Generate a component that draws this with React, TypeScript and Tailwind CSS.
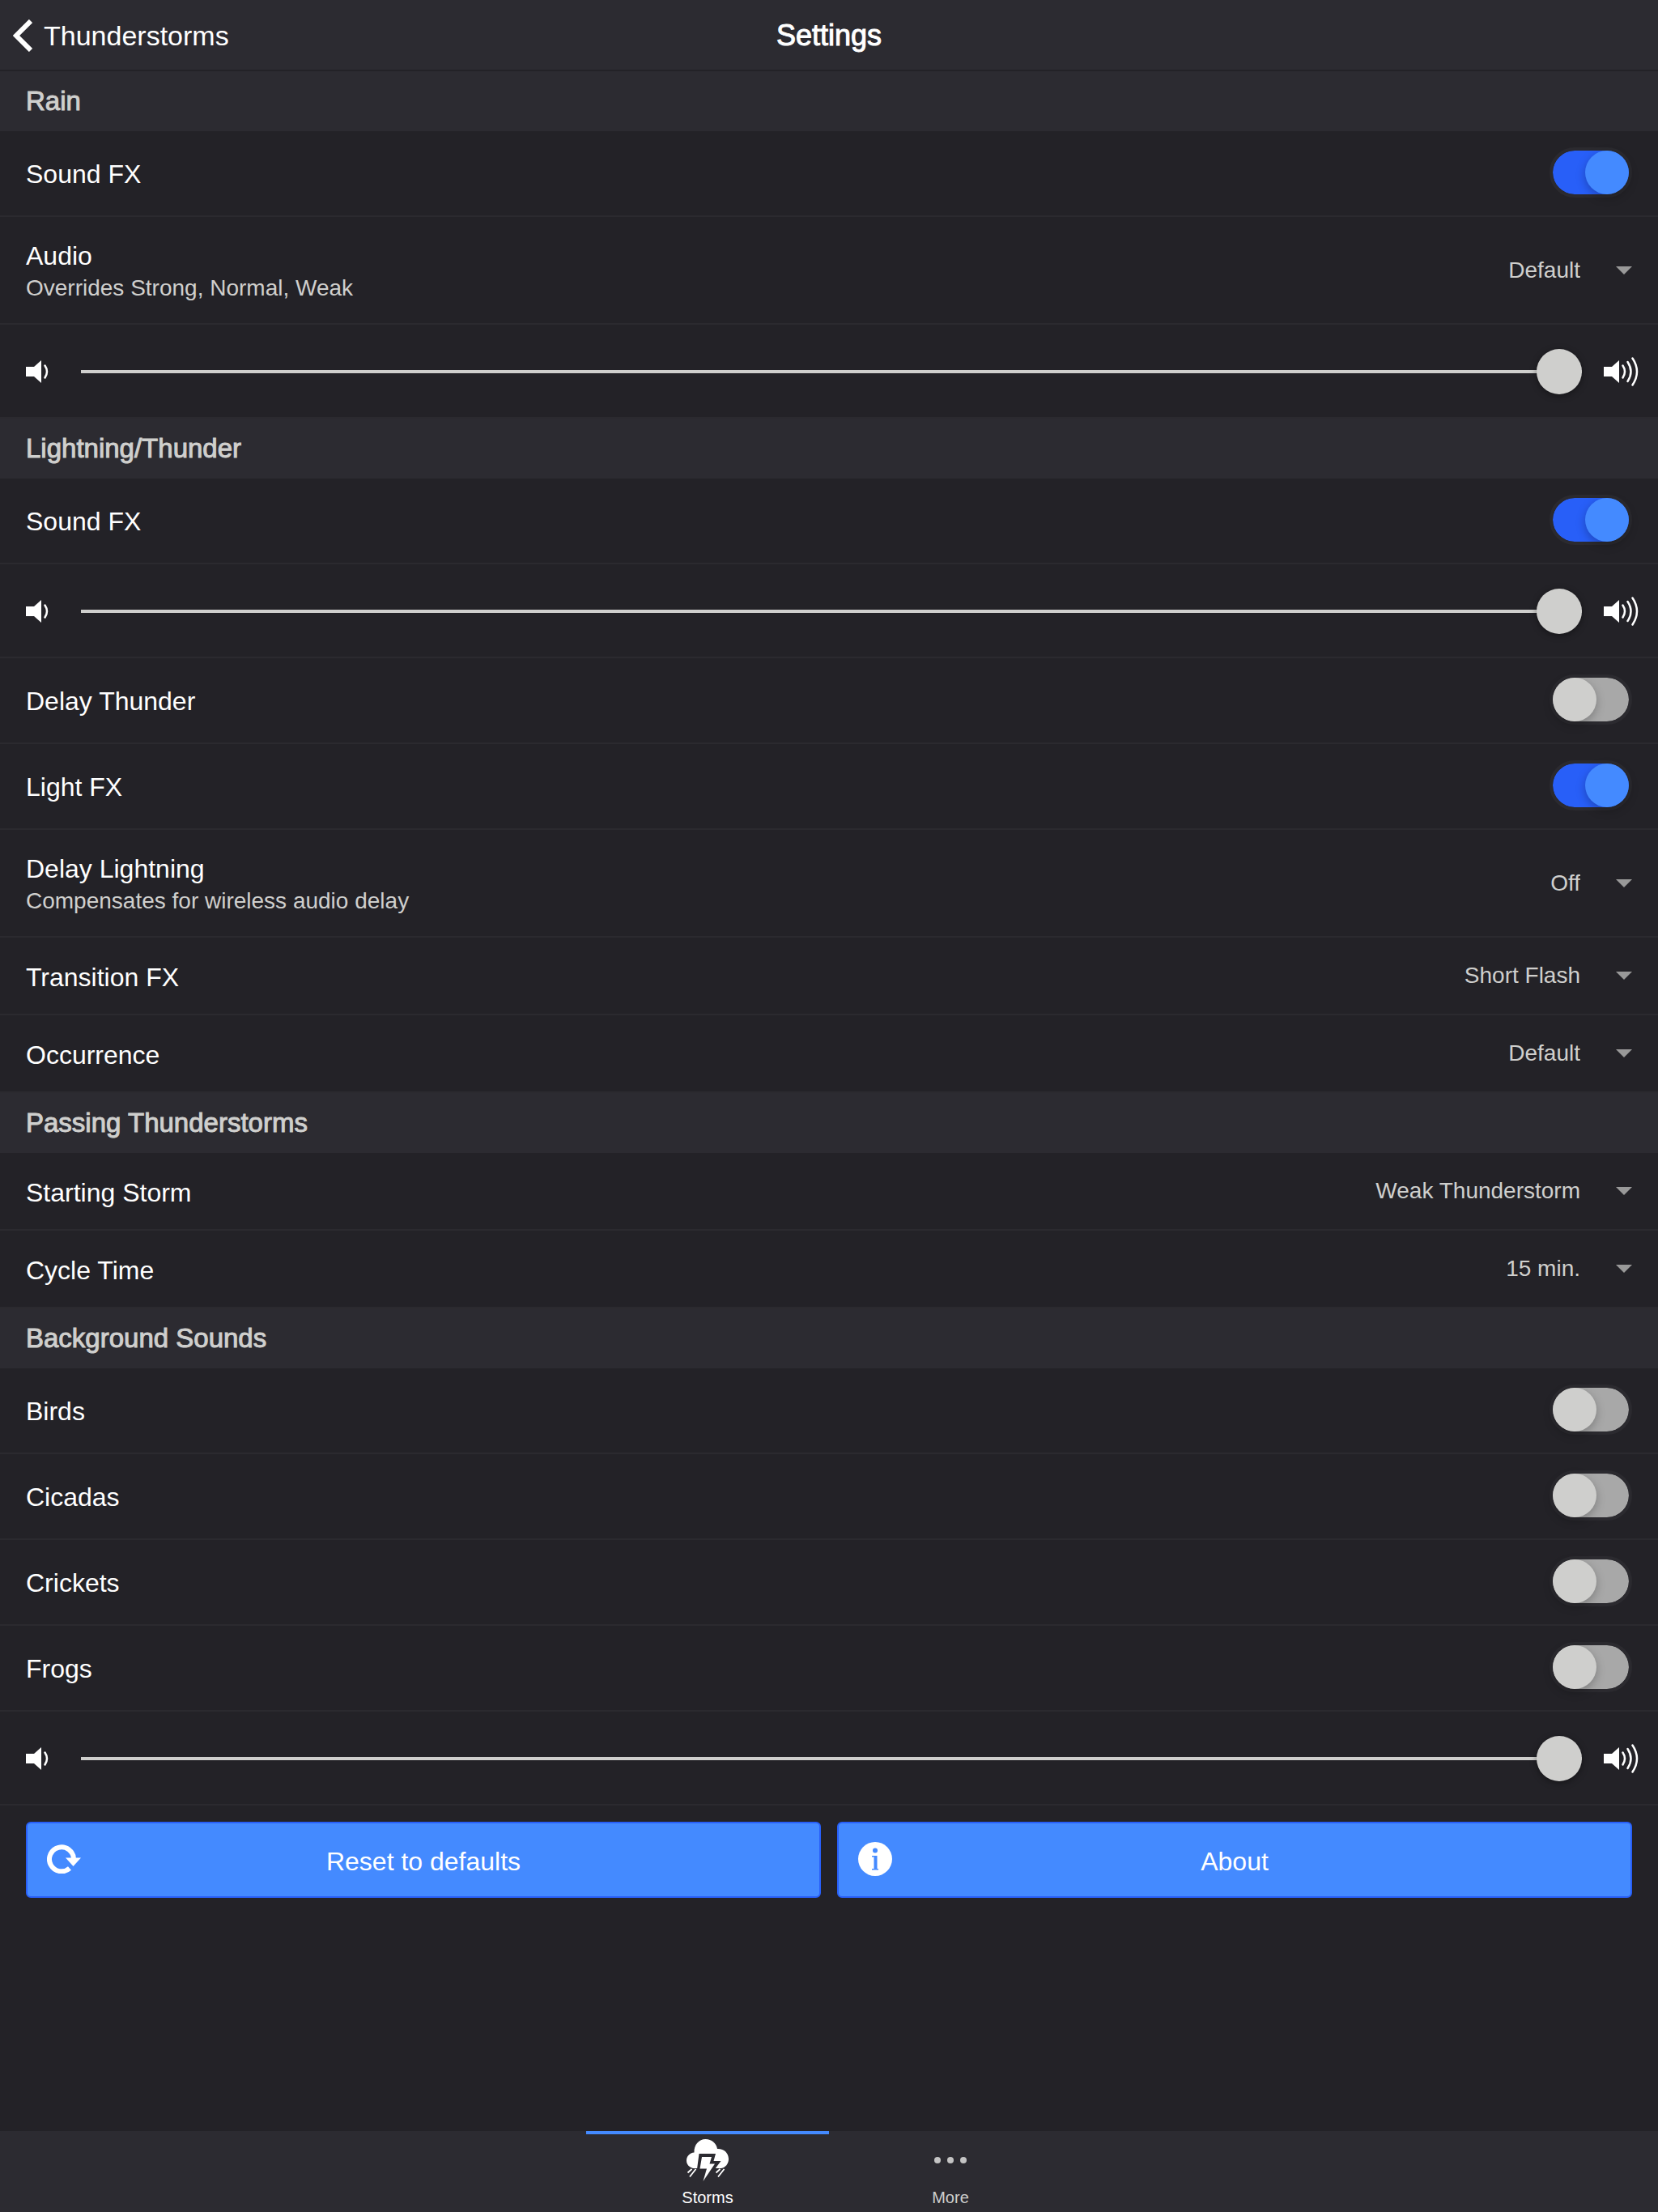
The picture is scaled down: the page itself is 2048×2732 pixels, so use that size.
import { useState } from 'react'

const SETTINGS_FONT = "font-['Liberation_Sans',Arial,sans-serif]"

function SpeakerIcon({ waves }: { waves: 1 | 3 }) {
  return (
    <svg className={waves === 1 ? 'w-7 h-9 shrink-0' : 'w-[43px] h-9 shrink-0'} viewBox={waves === 1 ? '0 0 28 36' : '0 0 43 36'} fill="none" aria-hidden="true">
      <path d="M0 12h10l9-8v28l-9-8H0z" fill="#fff" />
      <path d="M23.500 10.500q5 7.500 0 15" stroke="#fff" strokeWidth="2.500" strokeLinecap="round" />
      {waves === 3 && (
        <>
          <path d="M29.500 6q8 12 0 24" stroke="#fff" strokeWidth="2.500" strokeLinecap="round" />
          <path d="M35.500 1.500q11 16.500 0 33" stroke="#fff" strokeWidth="2.500" strokeLinecap="round" />
        </>
      )}
    </svg>
  )
}

function StormIcon() {
  return (
    <svg className="w-[52px] h-14" viewBox="0 0 52 56" aria-hidden="true">
      <path d="M8 36C3 34.500 0 31 0 26.500 0 21 4 17 9.500 16.500 9 7 15.500 0 23.500 0 31 0 37 5 38 12c8-.5 14 5 14 12.500 0 6-4 10.500-9 11.500z" fill="#fff" />
      <path d="M13 37l2.500-19H36l-2.500 9h9L35 37z" fill="#2c2b31" />
      <path d="M19 22h12l-2.500 8.500H35L20.500 52 25 36.500h-8.500z" fill="#fff" />
      <path d="M6.500 37L1.500 41.500M11.500 37L4 46.500M41.500 37l-5 4.500M46.500 37L39 46.500" stroke="#fff" strokeWidth="1.800" />
    </svg>
  )
}

function SectionHeader({ title }: { title: string }) {
  return (
    <h2 className="bg-[#2c2b31] px-8 py-[17px] text-[33px] leading-10 text-[#cfcfcd] [-webkit-text-stroke:1px_#cfcfcd]">{title}</h2>
  )
}

function ToggleRow({ id, label, defaultOn = false }: { id: string; label: string; defaultOn?: boolean }) {
  const [on, setOn] = useState(defaultOn)

  return (
    <div className="flex items-center justify-between border-b-2 border-[#2b2a2f] px-8 pt-5 pb-[22px]">
      <label htmlFor={id} className="pt-1 text-[32px] leading-10">{label}</label>
      <input
        id={id}
        type="checkbox"
        role="switch"
        checked={on}
        onChange={(e) => setOn(e.target.checked)}
        className="flex h-[62px] w-[102px] appearance-none rounded-full border-4 border-[#2b2a2f] bg-[#a8a8a8] bg-clip-padding before:block before:h-[54px] before:w-[54px] before:rounded-full before:bg-[#cfcfcd] before:shadow-[0_4px_12px_rgba(0,0,0,0.25)] before:content-[''] checked:justify-end checked:bg-[#285ff8] checked:before:bg-[#448aff]"
      />
    </div>
  )
}

function SelectRow({ id, label, hint, options }: { id: string; label: string; hint?: string; options: string[] }) {
  return (
    <div className="flex items-center justify-between border-b-2 border-[#2b2a2f] px-8">
      <label htmlFor={id} className={hint ? 'pt-7 pb-[23px]' : 'pt-[29px] pb-[25px]'}>
        <span className="block text-[32px] leading-10">{label}</span>
        {hint && <span className="block text-[28px] leading-10 text-[#cfcfcd]">{hint}</span>}
      </label>
      <div className="flex items-center gap-11">
        <select id={id} className="appearance-none bg-transparent text-right text-[28px] leading-9 text-[#cfcfcd] [field-sizing:content] [text-align-last:right]">
          {options.map((option) => (
            <option key={option}>{option}</option>
          ))}
        </select>
        <svg className="h-2.5 w-5" viewBox="0 0 20 10" fill="#999" aria-hidden="true">
          <path d="M0 0h20L10 10z" />
        </svg>
      </div>
    </div>
  )
}

function VolumeRow({ label }: { label: string }) {
  return (
    <div className="flex items-center border-b-2 border-[#2b2a2f] pt-[30px] pb-7 pl-8 pr-6">
      <SpeakerIcon waves={1} />
      <input
        type="range"
        aria-label={label}
        min={0}
        max={100}
        defaultValue={100}
        className="ml-10 mr-[27px] h-14 min-w-0 flex-1 appearance-none bg-transparent [&::-webkit-slider-runnable-track]:h-1 [&::-webkit-slider-runnable-track]:bg-[#cfcfcd] [&::-webkit-slider-thumb]:-mt-[26px] [&::-webkit-slider-thumb]:h-14 [&::-webkit-slider-thumb]:w-14 [&::-webkit-slider-thumb]:appearance-none [&::-webkit-slider-thumb]:rounded-full [&::-webkit-slider-thumb]:bg-[#cfcfcd] [&::-webkit-slider-thumb]:shadow-[0_2px_8px_rgba(0,0,0,0.4)]"
      />
      <SpeakerIcon waves={3} />
    </div>
  )
}

export default function App() {
  return (
    <div className={`flex min-h-screen flex-col bg-[#232227] text-white ${SETTINGS_FONT}`}>
      {/* HEADER */}
      <header className="grid grid-cols-3 items-center border-b-2 border-[#232227] bg-[#2c2b31] px-4 pt-[23px] pb-[21px]">
        <a href="#storms" className="flex items-center gap-3.5 text-[34px] leading-[42px]">
          <svg className="h-10 w-6" viewBox="0 0 24 40" fill="none" stroke="#fff" strokeWidth="6" aria-hidden="true">
            <path d="M22 2L4 20l18 18" />
          </svg>
          Thunderstorms
        </a>
        <h1 className="text-center text-[36px] leading-[42px] [-webkit-text-stroke:1px_#fff]">Settings</h1>
      </header>

      <main className="flex-1">
        {/* RAIN */}
        <SectionHeader title="Rain" />
        <ToggleRow id="rain-sound" label="Sound FX" defaultOn />
        <SelectRow id="rain-audio" label="Audio" hint="Overrides Strong, Normal, Weak" options={['Default', 'Strong', 'Normal', 'Weak']} />
        <VolumeRow label="Rain volume" />

        {/* LIGHTNING / THUNDER */}
        <SectionHeader title="Lightning/Thunder" />
        <ToggleRow id="thunder-sound" label="Sound FX" defaultOn />
        <VolumeRow label="Thunder volume" />
        <ToggleRow id="delay-thunder" label="Delay Thunder" />
        <ToggleRow id="light-fx" label="Light FX" defaultOn />
        <SelectRow id="delay-lightning" label="Delay Lightning" hint="Compensates for wireless audio delay" options={['Off', 'On']} />
        <SelectRow id="transition" label="Transition FX" options={['Short Flash', 'Long Flash']} />
        <SelectRow id="occurrence" label="Occurrence" options={['Default']} />

        {/* PASSING THUNDERSTORMS */}
        <SectionHeader title="Passing Thunderstorms" />
        <SelectRow id="starting-storm" label="Starting Storm" options={['Weak Thunderstorm', 'Normal Thunderstorm', 'Strong Thunderstorm']} />
        <SelectRow id="cycle-time" label="Cycle Time" options={['15 min.', '30 min.', '60 min.']} />

        {/* BACKGROUND SOUNDS */}
        <SectionHeader title="Background Sounds" />
        <ToggleRow id="birds" label="Birds" />
        <ToggleRow id="cicadas" label="Cicadas" />
        <ToggleRow id="crickets" label="Crickets" />
        <ToggleRow id="frogs" label="Frogs" />
        <VolumeRow label="Background volume" />

        <div className="grid grid-cols-2 gap-5 px-8 py-5">
          <button type="button" className="relative rounded-md border-2 border-[#285ff8] bg-[#448aff] pt-[27px] pb-[23px] text-[32px] leading-10">
            <svg className="absolute left-6 top-[26px] h-9 w-[42px]" viewBox="0 0 42 36" fill="none" aria-hidden="true">
              <path d="M28 29.500A15 15 0 1 1 33 18" stroke="#fff" strokeWidth="6" />
              <path d="M23 16.500h19L32.500 27z" fill="#fff" />
            </svg>
            Reset to defaults
          </button>
          <button type="button" className="relative rounded-md border-2 border-[#285ff8] bg-[#448aff] pt-[27px] pb-[23px] text-[32px] leading-10">
            <svg className="absolute left-6 top-[23px] size-[42px]" viewBox="0 0 42 42" aria-hidden="true">
              <circle cx="21" cy="21" r="21" fill="#fff" />
              <circle cx="21" cy="10.500" r="3" fill="#448aff" />
              <path d="M17 17h6.500v16H25v1.500h-8V33h2.500V18.500H17z" fill="#448aff" />
            </svg>
            About
          </button>
        </div>
      </main>

      {/* TAB BAR */}
      <nav className="flex justify-center bg-[#2c2b31] text-[20px] leading-6">
        <a href="#storms" className="flex w-[300px] flex-col items-center border-t-4 border-[#448aff] pt-1.5 pb-1.5">
          <StormIcon />
          <span className="pt-1">Storms</span>
        </a>
        <a href="#more" className="flex w-[300px] flex-col items-center border-t-4 border-transparent pt-1.5 pb-1.5 text-[#cfcfcd]">
          <svg className="h-14 w-10" viewBox="0 0 40 56" fill="#c4c4c4" aria-hidden="true">
            <circle cx="4" cy="26" r="4" />
            <circle cx="20" cy="26" r="4" />
            <circle cx="36" cy="26" r="4" />
          </svg>
          <span className="pt-1">More</span>
        </a>
      </nav>
    </div>
  )
}
